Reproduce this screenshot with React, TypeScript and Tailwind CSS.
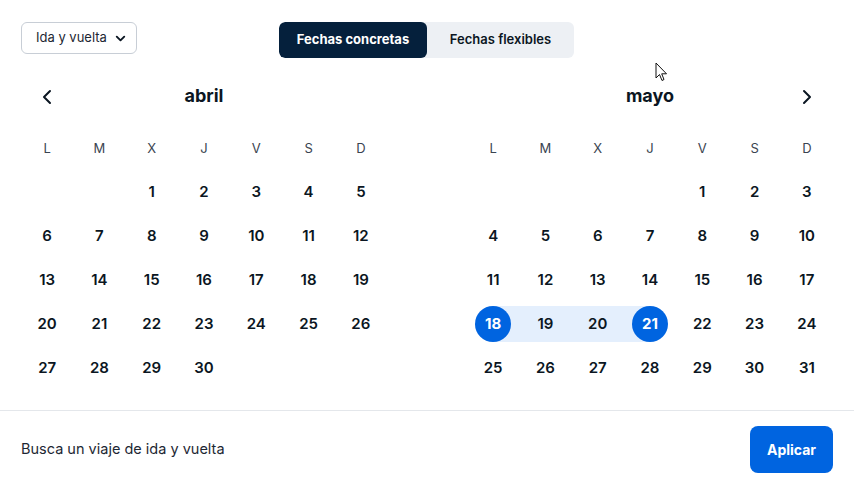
import { ChevronDown, ChevronLeft, ChevronRight } from 'lucide-react';

const weekdays = ['L', 'M', 'X', 'J', 'V', 'S', 'D'];

type Month = {
  name: string;
  offset: number;
  days: number;
};

const months: Month[] = [
  { name: 'abril', offset: 2, days: 30 },
  { name: 'mayo', offset: 4, days: 31 },
];

function DayCell({ day, monthIndex }: { day: number | null; monthIndex: number }) {
  if (day === null) return <div className="h-11" />;
  const inMay = monthIndex === 1;
  const isStart = inMay && day === 18;
  const isEnd = inMay && day === 21;
  const inRange = inMay && day > 18 && day < 21;

  return (
    <div className="relative h-11 flex items-center justify-center">
      {inRange && <div className="absolute inset-x-0 top-[3px] h-9 bg-[#e4effd]" />}
      {isStart && <div className="absolute left-1/2 right-0 top-[3px] h-9 bg-[#e4effd]" />}
      {isEnd && <div className="absolute left-0 right-1/2 top-[3px] h-9 bg-[#e4effd]" />}
      {isStart || isEnd ? (
        <span className="relative -mt-[2px] w-9 h-9 rounded-full bg-[#0064e0] text-white flex items-center justify-center text-[15px] font-bold">
          {day}
        </span>
      ) : (
        <span className="relative -mt-[2px] text-[15px] font-semibold text-[#0b1622]">{day}</span>
      )}
    </div>
  );
}

function Calendar({ month, index }: { month: Month; index: number }) {
  const cells: (number | null)[] = [];
  for (let i = 0; i < month.offset; i += 1) cells.push(null);
  for (let d = 1; d <= month.days; d += 1) cells.push(d);

  return (
    <div className="w-[366px]">
      <div className="h-10 flex items-center justify-between">
        <div className="w-[52px] flex justify-center">
          {index === 0 && <ChevronLeft size={24} strokeWidth={2} className="text-[#0b1622]" />}
        </div>
        <span className="text-[18px] font-bold text-[#0b1622] -mt-[3px]">{month.name}</span>
        <div className="w-[52px] flex justify-center">
          {index === 1 && <ChevronRight size={24} strokeWidth={2} className="text-[#0b1622]" />}
        </div>
      </div>
      <div className="grid grid-cols-7 mt-[10px]">
        {weekdays.map((w) => (
          <div key={w} className="h-11 flex items-center justify-center text-[13px] text-[#3a4450]">
            {w}
          </div>
        ))}
        {cells.map((d, i) => (
          <DayCell key={i} day={d} monthIndex={index} />
        ))}
      </div>
    </div>
  );
}

export default function App() {
  return (
    <div className="relative w-[854px] h-[487px] bg-white overflow-hidden font-['Inter',sans-serif]">
      <div className="px-[21px] pt-[22px] pb-[19px]">
        <div className="relative h-9 flex items-start">
          <button
            type="button"
            className="h-8 w-[116px] pl-[14px] pr-[8px] rounded-md border border-[#c8ced6] flex items-center justify-between text-[13px] text-[#1d2733]"
          >
            Ida y vuelta
            <ChevronDown size={15} strokeWidth={3} className="text-[#0b1622]" />
          </button>
          <div className="absolute left-[258px] top-0 h-9 w-[295px] flex rounded-md bg-[#edf0f4] overflow-hidden">
            <div className="w-[148px] bg-[#05203c] text-white text-[13px] font-bold flex items-center justify-center rounded-md">
              Fechas concretas
            </div>
            <div className="flex-1 text-[#0b1622] text-[13px] font-semibold flex items-center justify-center">
              Fechas flexibles
            </div>
          </div>
        </div>
        <div className="mt-[19px] flex justify-between">
          {months.map((m, i) => (
            <Calendar key={m.name} month={m} index={i} />
          ))}
        </div>
      </div>
      <div className="border-t border-[#e4e7eb] h-[77px] px-[21px] flex items-center justify-between">
        <span className="text-[14.5px] text-[#1d2733]">Busca un viaje de ida y vuelta</span>
        <button
          type="button"
          className="w-[83px] h-[47px] rounded-lg bg-[#0064e0] text-white text-[14px] font-bold"
        >
          Aplicar
        </button>
      </div>
      <svg className="absolute left-[655px] top-[62px]" width="14" height="20" viewBox="0 0 14 20">
        <path d="M1 1 L1 16 L4.5 12.5 L7 18.5 L9 17.5 L6.7 11.8 L11.5 11.8 Z" fill="white" stroke="#111" strokeWidth="1" strokeLinejoin="round" />
      </svg>
    </div>
  );
}
